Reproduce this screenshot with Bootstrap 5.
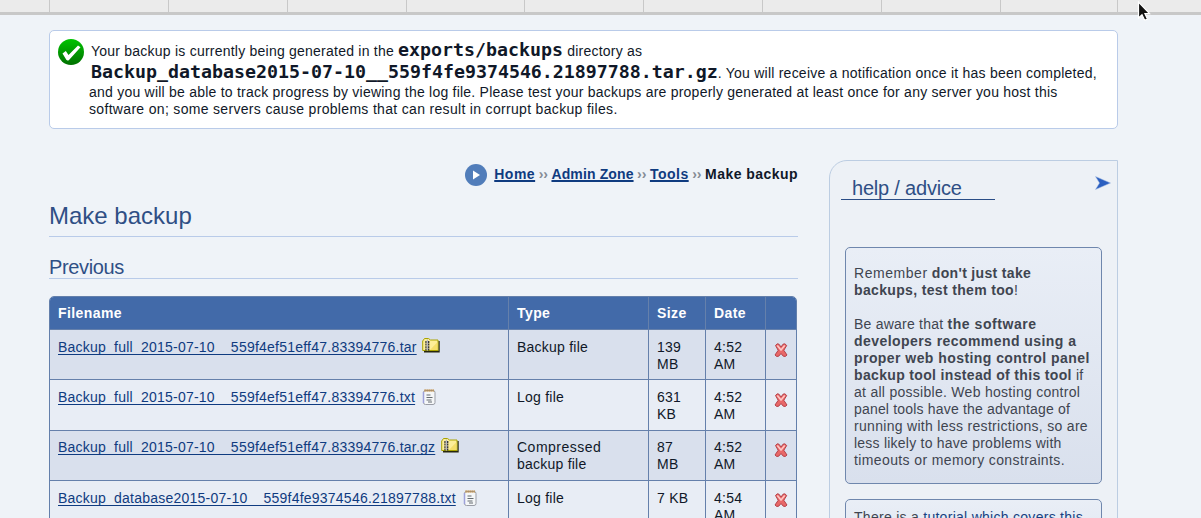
<!DOCTYPE html>
<html lang="en">
<head>
<meta charset="utf-8">
<title>Make backup</title>
<meta name="viewport" content="width=device-width, initial-scale=1">
<link rel="stylesheet" href="https://cdn.jsdelivr.net/npm/bootstrap@5.3.0/dist/css/bootstrap.min.css">
<style>
body{background:#eff3f8;color:#101828;font:14px/17px "Liberation Sans",Arial,sans-serif;letter-spacing:.23px;height:518px;overflow:hidden}
a{color:#0f3b80;text-decoration:underline;text-decoration-thickness:1px;text-underline-offset:2px;text-decoration-skip-ink:none}
svg{display:block;flex:none}
.topbar{height:15px;background:#ebebeb;border-bottom:3px solid #c8c8c8}
.topbar div{width:118.85px;border-left:1px solid #c8c8c8;flex:none}
.topbar .edge-l{width:49px;border:0}
.page{width:1069px;margin-left:49px}
.notice{height:99px;margin-top:15px;padding:8px 7.5px;background:#fff;border:1px solid #b9cbe9;border-radius:5px}
.notice .copy{margin:2px 0 0 4.500px}
.tall{height:22px;line-height:21px;padding-left:2px}
.tall+.tall{height:21px;line-height:19px}
.tall kbd{all:unset;font:bold 18.27px/18px "DejaVu Sans Mono",monospace;letter-spacing:0}
.main-col{width:749px}
.crumbs{height:24px;font-weight:bold;letter-spacing:.5px}
.crumbs a{text-decoration-thickness:2px;text-underline-offset:1px}
.crumbs i{font-style:normal;color:#858b95;font-weight:bold;letter-spacing:0;margin:0 3.500px}
h1,h2,h3{font-weight:400;color:#2f4f85;letter-spacing:0;margin:0}
h1{font-size:24px;line-height:30px;height:36px;margin-top:15px;border-bottom:1px solid #b9cbe9}
h2{font-size:20px;line-height:25px;height:24px;margin-top:18px;border-bottom:1px solid #b9cbe9;letter-spacing:-.35px}
.filebox{width:748px;margin-top:17px;border:1px solid #637fab;border-radius:5px 5px 0 0}
.files{table-layout:fixed;width:746px;margin:0;border-collapse:separate;border-spacing:0;color:inherit}
.files>thead>tr>th,.files>tbody>tr>td{border:0 solid #6580ab;border-width:0 1px 1px 0;padding:9px 8px 0;vertical-align:top;background:#e8edf5}
.files>thead>tr>th{background:#426aa9;color:#fff;padding:8px 8px 0;letter-spacing:.42px}
.files tr>:last-child{border-right-width:0!important}
.files tbody tr:nth-child(odd) td{background:#d9e0ed}
.files tbody tr:nth-child(even) td{background:#e8edf5}
.files thead tr{height:33px}.files tbody tr{height:50px}.files tbody tr.odd-h{height:51px}
.files td:last-child svg{margin-top:3px}
.side{width:289px;height:400px;border:1px solid #bccde2;border-radius:18px 0 0 0;background:#edf1f6;padding:15px 15px 0;margin-top:-2px}
h3{font-size:20px;line-height:25px;width:154px;height:24px;margin-left:-4px;padding-left:11px;border-bottom:1px solid #2a4d86;letter-spacing:-.2px}
.tip{width:257px;border:1px solid #6f87ad;border-radius:5px;padding:17px 8px 0;white-space:nowrap;color:#3f4550;background:linear-gradient(#e9eef6,#d9e0ed)}
.tip+.tip{margin-top:15px;padding-top:9px;height:100px}
.tip a{color:#174182;text-underline-offset:3px}
.tip b{letter-spacing:.34px}.tip .w1{letter-spacing:.55px}.tip .w2{letter-spacing:.44px}
.pointer{left:1137px;top:1px}
</style>
</head>
<body>
<div class="topbar d-flex"><div class="edge-l"></div><div></div><div></div><div></div><div></div><div></div><div></div><div></div><div></div><div style="width:117px"></div><div></div></div>
<div class="page">
  <div class="notice d-flex" role="alert">
    <svg width="27" height="27" viewBox="0 0 27 27"><defs><linearGradient id="g" x2="0" y2="1"><stop stop-color="#00c400"/><stop offset="1" stop-color="#007000"/></linearGradient></defs><circle cx="13" cy="13" r="13" fill="url(#g)"/><path d="M4.500 14.500L7.800 12l2.700 4L20 6.500l2.500 1.800L11 21Q9.500 22.300 8.300 20.800z" fill="#fff"/></svg>
    <div class="copy text-nowrap">
      <div class="tall">Your backup is currently being generated in the <kbd>exports/backups</kbd> directory as</div>
      <div class="tall"><kbd>Backup_database2015-07-10__559f4fe9374546.21897788.tar.gz</kbd>. You will receive a notification once it has been completed,</div>
      <div>and you will be able to track progress by viewing the log file. Please test your backups are properly generated at least once for any server you host this</div>
      <div style="letter-spacing:.32px">software on; some servers cause problems that can result in corrupt backup files.</div>
    </div>
  </div>
  <div class="d-flex justify-content-between" style="margin-top:33px">
    <main class="main-col">
      <nav class="crumbs d-flex align-items-center justify-content-end text-nowrap" aria-label="breadcrumb">
        <svg style="margin:1px 7.500px 0 0" width="22" height="22" viewBox="0 0 22 22"><circle cx="11" cy="11" r="11" fill="#517dba"/><path d="M8 6.500l7 4.500-7 4.500z" fill="#fff"/></svg>
        <a href="#">Home</a><i>››</i><a href="#" style="letter-spacing:.12px">Admin Zone</a><i>››</i><a href="#">Tools</a><i>››</i><span style="letter-spacing:.46px">Make backup</span>
      </nav>
      <h1>Make backup</h1>
      <h2>Previous</h2>
      <div class="filebox overflow-hidden">
        <table class="table files">
          <colgroup><col style="width:459px"><col style="width:140px"><col style="width:57px"><col style="width:60px"><col style="width:30px"></colgroup>
          <thead><tr><th>Filename</th><th>Type</th><th>Size</th><th>Date</th><th></th></tr></thead>
          <tbody>
            <tr><td><div class="d-flex"><a href="#">Backup_full_2015-07-10__559f4ef51eff47.83394776.tar</a><svg style="margin:-2px 0 0 5px" width="18" height="16"><use href="#zip"/></svg></div></td><td>Backup file</td><td>139<br>MB</td><td>4:52<br>AM</td><td><svg width="14" height="16"><use href="#del"/></svg></td></tr>
            <tr class="odd-h"><td><div class="d-flex"><a href="#">Backup_full_2015-07-10__559f4ef51eff47.83394776.txt</a><svg style="margin:-1px 0 0 7px" width="16" height="18"><use href="#note"/></svg></div></td><td>Log file</td><td>631<br>KB</td><td>4:52<br>AM</td><td><svg width="14" height="16"><use href="#del"/></svg></td></tr>
            <tr><td style="padding-top:8px"><div class="d-flex"><a href="#">Backup_full_2015-07-10__559f4ef51eff47.83394776.tar.gz</a><svg style="margin:-2px 0 0 6px" width="18" height="16"><use href="#zip"/></svg></div></td><td style="padding-top:8px"><span style="letter-spacing:.5px">Compressed</span><br>backup file</td><td style="padding-top:8px">87<br>MB</td><td style="padding-top:8px">4:52<br>AM</td><td style="padding-top:8px"><svg width="14" height="16"><use href="#del"/></svg></td></tr>
            <tr class="odd-h"><td><div class="d-flex"><a href="#">Backup_database2015-07-10__559f4fe9374546.21897788.txt</a><svg style="margin:-1px 0 0 7px" width="16" height="18"><use href="#note"/></svg></div></td><td>Log file</td><td>7 KB</td><td>4:54<br>AM</td><td style="padding-top:8px"><svg width="14" height="16"><use href="#del"/></svg></td></tr>
          </tbody>
        </table>
      </div>
    </main>
    <aside class="side">
      <div class="d-flex justify-content-between" style="height:71px"><h3>help / advice</h3>
        <svg style="margin-right:-9px" width="16" height="15" viewBox="0 0 16 15"><path d="M.5.500L15.500 7 .5 13.500 4.500 7z" fill="#2b5fc0" stroke="#9fb8e3" stroke-width=".5"/></svg></div>
      <div class="tip" style="height:237px">
        <p class="mb-3" style="height:35px"><span style="letter-spacing:.55px">Remember</span> <b>don't just take<br>backups, test them too</b>!</p>
        <p class="m-0">Be aware that <b class="w1">the software</b><br><b class="w2">developers recommend using a<br>proper web hosting control panel</b><br><b>backup tool instead of this tool</b> if<br><span style="letter-spacing:.28px">at all possible. Web hosting control</span><br><span style="letter-spacing:.18px">panel tools have the advantage of</span><br><span style="letter-spacing:.3px">running with less restrictions, so are</span><br>less likely to have problems with<br><span style="letter-spacing:.38px">timeouts or memory constraints.</span></p>
      </div>
      <div class="tip" style="letter-spacing:.28px">There is a <a href="#">tutorial which covers this</a></div>
    </aside>
  </div>
</div>
<svg class="pointer position-absolute" width="14" height="21" viewBox="0 0 14 21"><path d="M1.500 1v16l3.500-3.300 2.700 5.600 2.700-1.200-2.500-5.500h4.600z" fill="#111" stroke="#fff" stroke-width="1.200"/></svg>
<svg class="position-absolute" width="0" height="0">
  <symbol id="zip" viewBox="0 0 18 16"><path d="M2 14.800h15V4" fill="none" stroke="#26260f" stroke-width="1.400"/><path d="M.7 13.500V4l1.800-2.500h4L8.500 3H16v10.500z" fill="#fcee98" stroke="#a9a300"/><path d="M8 13h7.500V5z" fill="#f4df6a"/><path d="M4 4v9.500M6.700 4v9.500" stroke="#2c2d35" stroke-width="1.300" stroke-dasharray="2 .6"/><path d="M5.400 2.500v11" stroke="#b6b8c0" stroke-width="1.200"/></symbol>
  <symbol id="note" viewBox="0 0 16 18"><rect x="1.500" y="2.500" width="11.500" height="14" rx="2" fill="#f5f7f8" stroke="#9a9da6"/><path d="M1.500 4v11" stroke="#9da1da" stroke-width="1.500"/><path d="M2.500 2.500h10" stroke="#bd8a42" stroke-width="2.500" stroke-dasharray="1.200 .8"/><path d="M4.500 7h4M4.500 9.500h6M4.500 12h5M6 14h4" stroke="#646b70"/></symbol>
  <symbol id="del" viewBox="0 0 14 16"><path d="M1.500 3.500Q3 .8 5 2.200L7 5l2-2.800Q11 .8 12.700 3.500L9.800 8.300 13 13q-1.500 2.300-3.700 1.200L7 11.500l-2.300 2.700Q2.500 15.300 1 13l3.200-4.700z" fill="#e86868" stroke="#b4424a"/><path d="M3.300 3.500L7 8l3.700-4.500" fill="none" stroke="#ffc6c3" stroke-width="1.600"/></symbol>
</svg>
<script src="https://cdn.jsdelivr.net/npm/bootstrap@5.3.0/dist/js/bootstrap.bundle.min.js"></script>
</body>
</html>
